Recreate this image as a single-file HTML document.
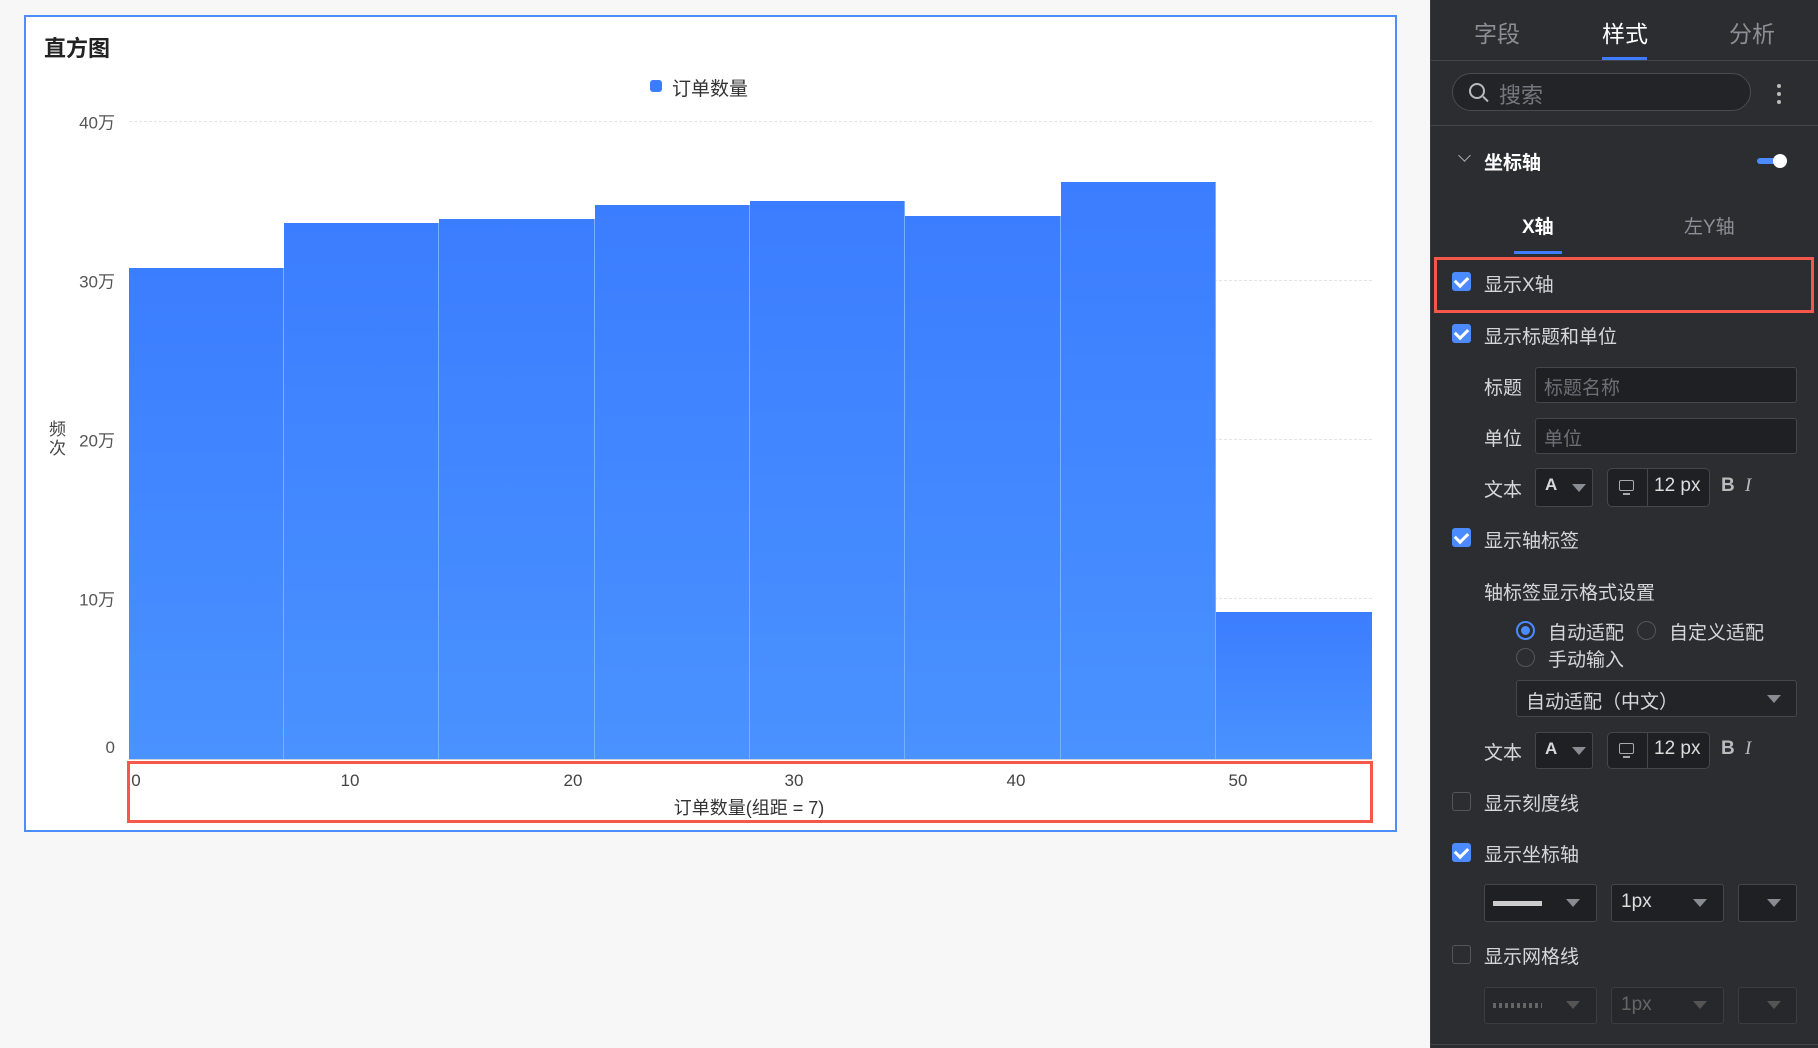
<!DOCTYPE html>
<html><head><meta charset="utf-8"><style>
*{margin:0;padding:0;box-sizing:border-box}
body{width:1818px;height:1048px;background:#f7f7f8;font-family:"Liberation Sans","Noto Sans CJK SC",sans-serif;position:relative;overflow:hidden}
.a{position:absolute;white-space:nowrap}
.chart{position:absolute;left:24px;top:15px;width:1373px;height:817px;background:#fff;border:2px solid #4c8dff}
.bar{position:absolute;bottom:289px;background:linear-gradient(#3b7dff,#4a92ff);border-right:1px solid #7aaeff}
.yl{position:absolute;right:1703px;font-size:17px;color:#555;transform:translateY(-50%)}
.grid{position:absolute;left:129px;width:1243px;border-top:1px dashed #e4e4e4}
.xl{position:absolute;top:771px;font-size:17px;color:#444;transform:translateX(-50%)}
.panel{position:absolute;left:1430px;top:0;width:388px;height:1048px;background:#2c2d31;border-left:1px solid #3a3b40;color:#d6d7da;font-size:19px}
.p{position:absolute;white-space:nowrap}
.cb{position:absolute;left:21px;width:19px;height:19px;border-radius:3px;background:#4b8bff}
.cb::after{content:"";position:absolute;left:5px;top:2px;width:6px;height:10px;border:solid #fff;border-width:0 3px 3px 0;transform:rotate(45deg)}
.cbo{position:absolute;left:21px;width:19px;height:19px;border-radius:3px;border:1px solid #55565c}
.inp{position:absolute;background:#1f2024;border:1px solid #46474d;border-radius:3px}
.tri{position:absolute;width:0;height:0;border-left:7px solid transparent;border-right:7px solid transparent;border-top:8px solid #8a8c94}
</style></head><body>
<div class="chart">
</div>
<div class="a" style="left:44px;top:31px;font-size:22px;font-weight:bold;color:#222">直方图</div>
<div class="a" style="left:650px;top:80px;width:12px;height:12px;border-radius:3px;background:#3b7dff"></div>
<div class="a" style="left:672px;top:74px;font-size:19px;color:#333">订单数量</div>
<div class="grid" style="top:121px"></div>
<div class="grid" style="top:280px"></div>
<div class="grid" style="top:439px"></div>
<div class="grid" style="top:598px"></div>
<div class="yl" style="top:121px">40万</div>
<div class="yl" style="top:280px">30万</div>
<div class="yl" style="top:439px">20万</div>
<div class="yl" style="top:598px">10万</div>
<div class="yl" style="top:748px">0</div>
<div class="a" style="left:49px;top:420px;width:18px;font-size:17px;color:#444;line-height:19px;white-space:normal">频次</div>
<div class="bar" style="left:129px;width:155px;top:268px;bottom:289px"></div>
<div class="bar" style="left:284px;width:155px;top:223px;bottom:289px"></div>
<div class="bar" style="left:439px;width:156px;top:219px;bottom:289px"></div>
<div class="bar" style="left:595px;width:155px;top:205px;bottom:289px"></div>
<div class="bar" style="left:750px;width:155px;top:201px;bottom:289px"></div>
<div class="bar" style="left:905px;width:156px;top:216px;bottom:289px"></div>
<div class="bar" style="left:1061px;width:155px;top:182px;bottom:289px"></div>
<div class="bar" style="left:1216px;width:156px;top:612px;bottom:289px;border-right:none"></div>
<div class="a" style="left:129px;top:759px;width:1243px;height:1px;background:#cfd3da"></div>
<div class="xl" style="left:136px">0</div>
<div class="xl" style="left:350px">10</div>
<div class="xl" style="left:573px">20</div>
<div class="xl" style="left:794px">30</div>
<div class="xl" style="left:1016px">40</div>
<div class="xl" style="left:1238px">50</div>
<div class="a" style="left:749px;top:794px;transform:translateX(-50%);font-size:18px;color:#333">订单数量(组距 = 7)</div>
<div class="a" style="left:127px;top:761px;width:1246px;height:62px;border:3px solid #f5584a"></div>

<div class="panel">
<div class="p" style="left:43px;top:15px;font-size:23px;color:#8d8f96">字段</div>
<div class="p" style="left:171px;top:15px;font-size:23px;color:#fff">样式</div>
<div class="p" style="left:298px;top:15px;font-size:23px;color:#8d8f96">分析</div>
<div class="p" style="left:171px;top:57px;width:45px;height:3px;background:#3d7cff"></div>
<div class="p" style="left:0;top:60px;width:388px;height:1px;background:#44454a"></div>
<div class="p" style="left:21px;top:73px;width:299px;height:38px;border:1px solid #4a4b51;border-radius:19px;background:#232428"></div>
<div class="p" style="left:38px;top:83px;width:16px;height:16px;border:2px solid #b8bac0;border-radius:50%"></div>
<div class="p" style="left:51px;top:98px;width:7px;height:2px;background:#b8bac0;transform:rotate(45deg)"></div>
<div class="p" style="left:68px;top:78px;font-size:22px;color:#75777e">搜索</div>
<div class="p" style="left:346px;top:84px;width:4px;height:4px;border-radius:2px;background:#bbb;box-shadow:0 8px 0 #bbb,0 16px 0 #bbb"></div>
<div class="p" style="left:0;top:125px;width:388px;height:1px;background:#44454a"></div>
<div class="p" style="left:29px;top:151px;width:9px;height:9px;border:solid #aaa;border-width:0 1.5px 1.5px 0;transform:rotate(45deg)"></div>
<div class="p" style="left:53px;top:148px;font-weight:bold;color:#fff">坐标轴</div>
<div class="p" style="left:326px;top:158px;width:28px;height:6px;border-radius:3px;background:#4b8bff"></div>
<div class="p" style="left:342px;top:154px;width:14px;height:14px;border-radius:7px;background:#fff"></div>
<div class="p" style="left:91px;top:212px;font-weight:bold;color:#fff">X轴</div>
<div class="p" style="left:253px;top:212px;color:#8d8f96">左Y轴</div>
<div class="p" style="left:83px;top:251px;width:48px;height:3px;background:#3d7cff"></div>
<div class="p" style="left:3px;top:257px;width:380px;height:56px;border:3px solid #f5584a"></div>
<div class="cb" style="top:272px"></div>
<div class="p" style="left:53px;top:270px">显示X轴</div>
<div class="cb" style="top:324px"></div>
<div class="p" style="left:53px;top:322px">显示标题和单位</div>
<div class="p" style="left:53px;top:373px">标题</div>
<div class="inp" style="left:104px;top:367px;width:262px;height:36px"></div>
<div class="p" style="left:113px;top:373px;color:#6d6f76">标题名称</div>
<div class="p" style="left:53px;top:424px">单位</div>
<div class="inp" style="left:104px;top:418px;width:262px;height:36px"></div>
<div class="p" style="left:113px;top:424px;color:#6d6f76">单位</div>
<div class="p" style="left:53px;top:475px">文本</div>
<div class="inp" style="left:104px;top:468px;width:58px;height:39px"></div>
<div class="p" style="left:114px;top:475px;font-weight:bold;font-size:17px">A</div>
<div class="tri" style="left:141px;top:484px"></div>
<div class="inp" style="left:176px;top:468px;width:103px;height:39px;border-radius:5px"></div>
<div class="p" style="left:216px;top:468px;width:1px;height:39px;background:#46474d"></div>
<div class="p" style="left:188px;top:480px;width:15px;height:11px;border:1.5px solid #aaa;border-radius:2px"></div>
<div class="p" style="left:192px;top:493px;width:7px;height:1.5px;background:#aaa"></div>
<div class="p" style="left:223px;top:475px;color:#ddd">12 px</div>
<div class="p" style="left:290px;top:475px;font-weight:bold;color:#bbb">B</div>
<div class="p" style="left:314px;top:475px;font-style:italic;color:#bbb;font-family:'Liberation Serif',serif">I</div>
<div class="cb" style="top:528px"></div>
<div class="p" style="left:53px;top:526px">显示轴标签</div>
<div class="p" style="left:53px;top:578px">轴标签显示格式设置</div>
<div class="p" style="left:85px;top:621px;width:19px;height:19px;border-radius:50%;border:2px solid #4b8bff"></div>
<div class="p" style="left:90px;top:626px;width:9px;height:9px;border-radius:50%;background:#4b8bff"></div>
<div class="p" style="left:117px;top:618px">自动适配</div>
<div class="p" style="left:206px;top:621px;width:19px;height:19px;border-radius:50%;border:1px solid #55565c"></div>
<div class="p" style="left:238px;top:618px">自定义适配</div>
<div class="p" style="left:85px;top:648px;width:19px;height:19px;border-radius:50%;border:1px solid #55565c"></div>
<div class="p" style="left:117px;top:645px">手动输入</div>
<div class="inp" style="left:85px;top:680px;width:281px;height:37px;background:#232428"></div>
<div class="p" style="left:95px;top:687px">自动适配（中文）</div>
<div class="tri" style="left:336px;top:695px"></div>
<div class="p" style="left:53px;top:738px">文本</div>
<div class="inp" style="left:104px;top:732px;width:58px;height:37px"></div>
<div class="p" style="left:114px;top:739px;font-weight:bold;font-size:17px">A</div>
<div class="tri" style="left:141px;top:747px"></div>
<div class="inp" style="left:176px;top:732px;width:103px;height:37px;border-radius:5px"></div>
<div class="p" style="left:216px;top:732px;width:1px;height:37px;background:#46474d"></div>
<div class="p" style="left:188px;top:743px;width:15px;height:11px;border:1.5px solid #aaa;border-radius:2px"></div>
<div class="p" style="left:192px;top:756px;width:7px;height:1.5px;background:#aaa"></div>
<div class="p" style="left:223px;top:738px;color:#ddd">12 px</div>
<div class="p" style="left:290px;top:738px;font-weight:bold;color:#bbb">B</div>
<div class="p" style="left:314px;top:738px;font-style:italic;color:#bbb;font-family:'Liberation Serif',serif">I</div>
<div class="cbo" style="top:792px"></div>
<div class="p" style="left:53px;top:789px">显示刻度线</div>
<div class="cb" style="top:843px"></div>
<div class="p" style="left:53px;top:840px">显示坐标轴</div>
<div class="inp" style="left:53px;top:884px;width:113px;height:38px"></div>
<div class="p" style="left:62px;top:901px;width:49px;height:5px;background:#ccc"></div>
<div class="tri" style="left:135px;top:899px"></div>
<div class="inp" style="left:180px;top:884px;width:113px;height:38px"></div>
<div class="p" style="left:190px;top:891px;color:#ddd">1px</div>
<div class="tri" style="left:262px;top:899px"></div>
<div class="inp" style="left:307px;top:884px;width:59px;height:38px"></div>
<div class="tri" style="left:336px;top:899px"></div>
<div class="cbo" style="top:945px"></div>
<div class="p" style="left:53px;top:942px">显示网格线</div>
<div class="inp" style="left:53px;top:987px;width:113px;height:37px;background:#27282c;border-color:#3c3d42"></div>
<div class="p" style="left:62px;top:1003px;width:49px;height:5px;background:repeating-linear-gradient(90deg,#666 0 3px,transparent 3px 6px)"></div>
<div class="tri" style="left:135px;top:1001px;border-top-color:#555"></div>
<div class="inp" style="left:180px;top:987px;width:113px;height:37px;background:#27282c;border-color:#3c3d42"></div>
<div class="p" style="left:190px;top:994px;color:#666">1px</div>
<div class="tri" style="left:262px;top:1001px;border-top-color:#555"></div>
<div class="inp" style="left:307px;top:987px;width:59px;height:37px;background:#27282c;border-color:#3c3d42"></div>
<div class="tri" style="left:336px;top:1001px;border-top-color:#555"></div>
<div class="p" style="left:0;top:1044px;width:388px;height:1px;background:#44454a"></div>
</div>
</body></html>
